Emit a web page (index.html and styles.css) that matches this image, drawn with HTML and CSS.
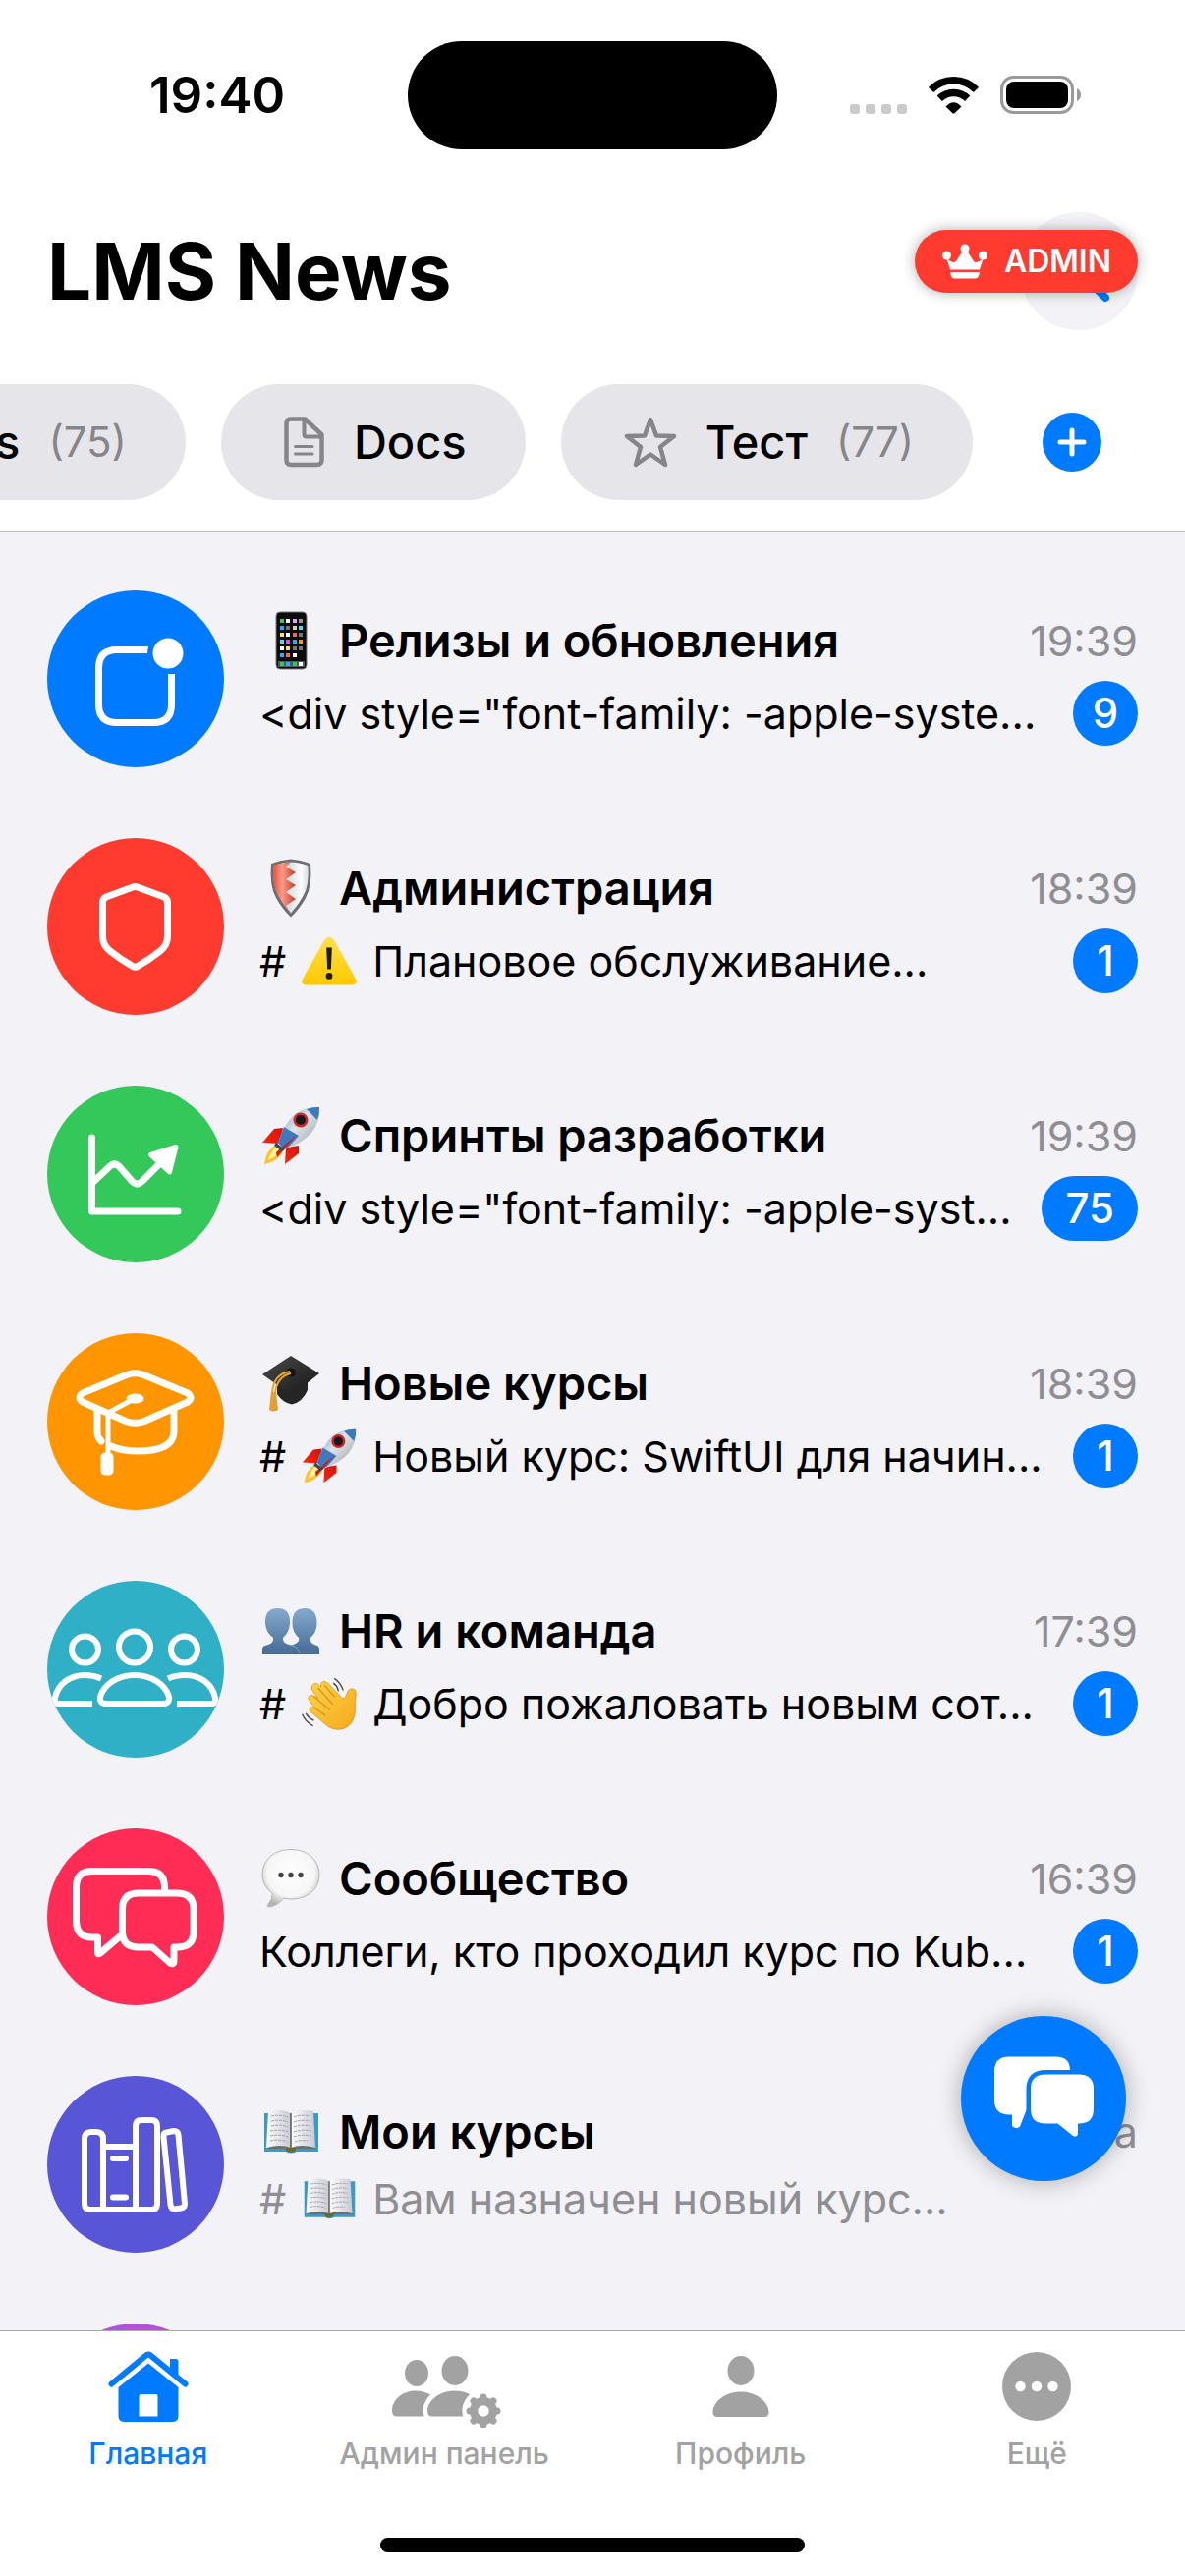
FILE: index.html
```html
<!DOCTYPE html>
<html lang="ru">
<head>
<meta charset="utf-8">
<meta name="viewport" content="width=device-width, initial-scale=1">
<title>LMS News</title>
<link rel="stylesheet" href="styles.css">
</head>
<body>
<svg class="defs" aria-hidden="true">
  <defs>
    <linearGradient id="g-cap" x1="0" y1="0" x2="1" y2="1"><stop offset="0" stop-color="#4a4a4a"/><stop offset="1" stop-color="#161616"/></linearGradient>
    <linearGradient id="g-warn" x1="0" y1="0" x2="0" y2="1"><stop offset="0" stop-color="#ffe04a"/><stop offset="1" stop-color="#ffc800"/></linearGradient>
    <linearGradient id="g-people" x1="0" y1="0" x2="0" y2="1"><stop offset="0" stop-color="#84abcf"/><stop offset="1" stop-color="#456a93"/></linearGradient>
    <linearGradient id="g-hull" x1="0" y1="0" x2="1" y2="1"><stop offset="0" stop-color="#5b92cf"/><stop offset=".45" stop-color="#dfe4e8"/><stop offset="1" stop-color="#8f979f"/></linearGradient>
    <linearGradient id="g-fin" x1="1" y1="0" x2="0" y2="1"><stop offset="0" stop-color="#c00d0d"/><stop offset=".6" stop-color="#f0200c"/><stop offset="1" stop-color="#ff9a2e"/></linearGradient>
    <linearGradient id="g-hand" x1="0" y1="0" x2="1" y2="1"><stop offset="0" stop-color="#ffd44a"/><stop offset="1" stop-color="#f5a91c"/></linearGradient>
    <radialGradient id="g-speech" cx=".5" cy=".4" r=".6"><stop offset="0" stop-color="#fff"/><stop offset=".7" stop-color="#f6f6f6"/><stop offset="1" stop-color="#b4b4b4"/></radialGradient>
    <linearGradient id="g-red" x1="0" y1="0" x2="1" y2="0"><stop offset="0" stop-color="#e8503c"/><stop offset=".4" stop-color="#ff9a88"/><stop offset="1" stop-color="#b83c2c"/></linearGradient>
    <linearGradient id="g-silver" x1="0" y1="0" x2="1" y2="0"><stop offset="0" stop-color="#b4b9be"/><stop offset=".8" stop-color="#fbfcfd"/><stop offset="1" stop-color="#d8dcdf"/></linearGradient>
    <linearGradient id="g-page" x1="0" y1="0" x2="1" y2="0"><stop offset="0" stop-color="#fdfdff"/><stop offset="1" stop-color="#c9cad3"/></linearGradient>
  </defs>

  <symbol id="e-phone" viewBox="0 0 64 64">
    <rect x="17" y="3" width="31" height="58" rx="4" fill="#0c0c0d" stroke="#7d7d80" stroke-width="1"/>
    <rect x="19" y="53" width="27" height="6" fill="#55585a"/>
    <g fill="#34c759"><rect x="21" y="10" width="4" height="4"/><rect x="21" y="54" width="4" height="4"/><rect x="34" y="54" width="4" height="4"/></g>
    <g fill="#fff"><rect x="27" y="10" width="4" height="4"/><rect x="27" y="24" width="4" height="4"/><rect x="21" y="38" width="4" height="4"/><rect x="34" y="45" width="4" height="4"/><rect x="40" y="54" width="4" height="4"/></g>
    <g fill="#1fb0ff"><rect x="21" y="17" width="4" height="4"/><rect x="34" y="31" width="4" height="4"/><rect x="21" y="45" width="4" height="4"/><rect x="27" y="54" width="4" height="4"/></g>
    <g fill="#4dd8f5"><rect x="40" y="17" width="4" height="4"/><rect x="21" y="31" width="4" height="4"/></g>
    <g fill="#ff6358"><rect x="34" y="24" width="4" height="4"/><rect x="27" y="45" width="4" height="4"/></g>
    <g fill="#ffe14d"><rect x="21" y="24" width="4" height="4"/><rect x="27" y="38" width="4" height="4"/></g>
    <g fill="#777"><rect x="27" y="17" width="4" height="4"/><rect x="40" y="24" width="4" height="4"/><rect x="34" y="38" width="4" height="4"/><rect x="40" y="38" width="4" height="4"/></g>
    <rect x="34" y="10" width="4" height="4" fill="#e3a3f2"/><rect x="40" y="10" width="4" height="4" fill="#999"/><rect x="34" y="17" width="4" height="4" fill="#e5c8a8"/><rect x="27" y="31" width="4" height="4" fill="#d94fe0"/><rect x="40" y="31" width="4" height="4" fill="#ff9500"/>
  </symbol>
  <symbol id="e-shield" viewBox="0 0 64 64">
    <path d="M12 7Q22 3 32 2.500Q42 3 52 7Q54 30 47 42Q41 53 32 61.500Q23 53 17 42Q10 30 12 7Z" fill="#6c6e71"/>
    <path d="M14.500 9Q24 5.500 32 5.500Q40 5.500 49.500 9Q51 29 44.500 40Q39 50 32 57.500Q25 50 19.500 40Q13 29 14.500 9Z" fill="url(#g-silver)"/>
    <path d="M14.500 9Q24 5.500 32 5.500L27 10L37 16L27 23L37 29L27 36L37 43L27 50L32 57.500Q25 50 19.500 40Q13 29 14.500 9Z" fill="url(#g-red)"/>
  </symbol>
  <symbol id="e-warning" viewBox="0 0 64 64">
    <path d="M32 6Q35 6 37 9L61 52Q63 57 58 58H6Q1 57 3 52L27 9Q29 6 32 6Z" fill="url(#g-warn)"/>
    <path d="M29 17.500H35L34 41H30Z" fill="#1b1b14"/><circle cx="32" cy="48.500" r="3.600" fill="#1b1b14"/>
  </symbol>
  <symbol id="e-rocket" viewBox="0 0 64 64">
    <path d="M24 24L15 25L3 39L21 40ZM40 42V50L26 61L27 44Z" fill="url(#g-fin)"/>
    <path d="M17 41Q7 46 5 61Q17 59 24 49Z" fill="#ffc22e"/><path d="M18 43Q11 48 9 57Q17 53 22 48Z" fill="#fff49a"/>
    <path d="M61 3Q46 2 35 11Q25 21 19 39L25 46Q43 40 53 29Q62 18 61 3Z" fill="url(#g-hull)"/>
    <path d="M61 3Q54 2.500 48 5L59 16Q61.500 10 61 3ZM25 23L19 39L25 46L30 43L40 32Z" fill="#3f79bd"/>
    <path d="M38 31L18 54L17 49Z" fill="#d4180f"/>
    <path d="M17 39L26 46L23 48L15 42Z" fill="#33495c"/>
    <circle cx="42" cy="16" r="7.500" fill="#d4232b"/><circle cx="42" cy="16" r="5" fill="#17191d"/>
  </symbol>
  <symbol id="e-cap" viewBox="0 0 64 64">
    <path d="M18 27V43Q24 52 33 53.500Q44 51 49 39V27Z" fill="#252525"/>
    <path d="M32 4L61 22L33 44L3 23Z" fill="url(#g-cap)"/>
    <ellipse cx="32" cy="21" rx="5" ry="4.500" fill="#111"/>
    <path d="M31 20Q14 23 13 42M32 22Q18 25 16 42" fill="none" stroke="#e8a52c" stroke-width="2"/>
    <path d="M12 41H17L19 59Q14 62 10 59Z" fill="#e3a032"/>
  </symbol>
  <symbol id="e-people" viewBox="0 0 64 64">
    <path d="M3 56V50Q3 47 9 46Q15 44 14 39Q7 34 6 25Q5 9 18.500 9Q32 9 31 25Q30 34 24 39Q23 44 30 46Q32 46.500 33 46.500Q42 44 40 39Q34 34 33.500 25Q33 9 46 9Q59 9 58.500 25Q58 34 52 39Q51 44 56 46Q61 47 61 50V56Z" fill="url(#g-people)"/>
    <path d="M30 46Q40 48 41 55" fill="none" stroke="#7aa6c8" stroke-width="1"/>
  </symbol>
  <symbol id="e-wave" viewBox="0 0 64 64">
    <path d="M14 12Q17 8 21 12L23 14Q22 8 27 8L31 10L45 25Q49 30 52 19Q55 14 60 17Q62 20 60 30Q62 50 52 57Q42 63 31 57L11 40Q10 35 16 36L10 28Q8 23 14 23L20 26L14 18Q12 15 14 12Z" fill="url(#g-hand)" stroke="#e39a20" stroke-width="1"/>
    <path d="M20 15L36 33M15 24L33 39M15 36L28 45M27 12L38 25" fill="none" stroke="#dc9420" stroke-width="1.500"/>
    <path d="M38 5Q44 9 47 17M37 10Q41 13 42 18M3 44Q6 51 14 56M7 43Q10 48 15 50" fill="none" stroke="#4d4d4d" stroke-width="1.500" stroke-linecap="round"/>
  </symbol>
  <symbol id="e-speech" viewBox="0 0 64 64">
    <path d="M32 2.500C49 2.500 61 13 61 28C61 43 49 53 33 53Q28 53 25 52Q17 61 9 61Q7 60.500 9 58Q14 53 13 47Q3 40 3 28C3 13 15 2.500 32 2.500Z" fill="url(#g-speech)" stroke="#b9b9b9" stroke-width="1"/>
    <g fill="#444"><circle cx="22" cy="28.500" r="2.700"/><circle cx="32" cy="28.500" r="2.700"/><circle cx="42" cy="28.500" r="2.700"/></g>
  </symbol>
  <symbol id="e-book" viewBox="0 0 64 64">
    <path d="M5 13H60V52H38Q32 55 27 52H5Z" fill="#3a9bc9"/>
    <path d="M8 46H31H57V49H36Q32 51 28 49H8Z" fill="#6c6d72"/>
    <path d="M9 11Q24 8 32 13V48Q22 44 7 48Z" fill="url(#g-page)"/>
    <path d="M55 11Q40 8 32 13V48Q42 44 57 48Z" fill="url(#g-page)"/>
    <path d="M12 16Q21 14 29 17M12 21Q21 19 29 22M12 26Q21 24 29 27M11 31Q21 29 29 32M11 36Q21 34 29 37M11 41Q21 39 28 42M35 17Q43 14 52 16M35 22Q43 19 52 21M35 27Q43 24 52 26M35 32Q43 29 53 31M35 37Q43 34 53 36M36 42Q41 40 49 41" fill="none" stroke="#9b9ca4" stroke-width="1" stroke-dasharray="3 1"/>
    <path d="M32 13V49" stroke="#55565c" stroke-width="1.500"/>
    <path d="M27 48H37V51Q32 54 27 51Z" fill="#6f6a20"/>
  </symbol>
</svg>

<div class="app">
  <header class="header">
    <div class="status">
      <time class="status-time">19:40</time>
      <div class="island"></div>
      <div class="status-icons">
        <svg class="signal" viewBox="0 0 58 38" aria-hidden="true"><g fill="#cbcbcb"><rect y="28" width="10" height="10" rx="3"/><rect x="16" y="28" width="10" height="10" rx="3"/><rect x="32" y="28" width="10" height="10" rx="3"/><rect x="48" y="28" width="10" height="10" rx="3"/></g></svg>
        <svg class="wifi" viewBox="0 0 51 38" aria-hidden="true"><path d="M2.500 13.500A32 32 0 0 1 48.500 13.500M11.300 22.300A20.500 20.500 0 0 1 39.700 22.300" fill="none" stroke="#000" stroke-width="7.500"/><path d="M17.500 30.500Q25.500 22 33.500 30.500L26.500 37.200Q25.500 38 24.500 37.200Z"/></svg>
        <svg class="battery" viewBox="0 0 83 40" aria-hidden="true"><rect x="1.500" y="1.500" width="72" height="36" rx="12" fill="none" stroke="#9a9a9a" stroke-width="3"/><rect x="6" y="6" width="63" height="27" rx="8"/><path d="M78 13Q82 15 82 19.500Q82 24 78 26Z" fill="#9a9a9a"/></svg>
      </div>
    </div>
    <div class="titlebar">
      <h1>LMS News</h1>
      <button class="search" type="button" aria-label="Поиск">
        <svg viewBox="0 0 64 64" aria-hidden="true"><circle cx="27" cy="27" r="20" fill="none" stroke="#007aff" stroke-width="7"/><path d="M42 42L59 59" stroke="#007aff" stroke-width="8" stroke-linecap="round"/></svg>
      </button>
      <button class="admin" type="button">
        <svg viewBox="0 0 46 36" aria-hidden="true"><g fill="#fff"><circle cx="23" cy="5" r="4.500"/><circle cx="4.500" cy="12" r="4.500"/><circle cx="41.500" cy="12" r="4.500"/><path d="M4 14Q10 21 14 18L21 7H25L32 18Q36 21 42 14L38 26.500H8ZM8 29H38L37 33Q36 35.500 33 35.500H13Q10 35.500 9 33Z"/></g></svg>
        ADMIN
      </button>
    </div>
    <nav class="chips" aria-label="Папки">
      <button class="chip" type="button"><span>s</span><span class="count">(75)</span></button>
      <button class="chip" type="button">
        <svg class="chip-doc" viewBox="0 0 42 52" aria-hidden="true"><g fill="none" stroke="#85858a" stroke-linecap="round" stroke-linejoin="round"><path d="M7 2.500H21.500L38.500 18.500V44Q38.500 49 33.500 49H7Q2.500 49 2.500 44V7Q2.500 2.500 7 2.500Z" stroke-width="4.500"/><path d="M20.500 3V18Q20.500 20.500 23 20.500H38" stroke-width="4"/><path d="M11.500 30.500H29M11.500 38H29" stroke-width="3"/></g></svg>
        <span>Docs</span>
      </button>
      <button class="chip" type="button">
        <svg class="chip-star" viewBox="0 0 54 52" aria-hidden="true"><path d="M27 3L33 19.500L51 20L37 31L42 49L27 38.500L12 49L17 31L3 20L21 19.500Z" fill="none" stroke="#85858a" stroke-width="4.500" stroke-linejoin="round"/></svg>
        <span>Тест</span><span class="count">(77)</span>
      </button>
      <button class="add" type="button" aria-label="Добавить">
        <svg viewBox="0 0 60 60" aria-hidden="true"><circle cx="30" cy="30" r="30" fill="#007aff"/><path d="M30 18V42M18 30H42" stroke="#fff" stroke-width="5" stroke-linecap="round"/></svg>
      </button>
    </nav>
  </header>

  <main class="main">
    <div class="list">
      <a class="row" href="#releases">
        <svg class="avatar blue" viewBox="0 0 180 180" aria-hidden="true"><path stroke-linecap="butt" d="M103 60.500H71Q52.500 60.500 52.500 79V116Q52.500 134.500 71 134.500H108Q126.500 134.500 126.500 116V85"/><circle class="gap" cx="123" cy="64" r="21"/><circle class="solid" cx="123" cy="64" r="15.500"/></svg>
        <div class="text">
          <div class="line"><h2><svg class="emoji" role="img" aria-label="Телефон"><use href="#e-phone"/></svg>Релизы и обновления</h2><time>19:39</time></div>
          <div class="line"><p>&lt;div style="font-family: -apple-syste...</p><span class="badge">9</span></div>
        </div>
      </a>
      <a class="row" href="#administration">
        <svg class="avatar red" viewBox="0 0 180 180" aria-hidden="true"><path d="M87 50Q89.500 49 92 50L119 60Q122.500 61.500 122.500 66V100Q122.500 109 115 115Q105 123 92 130.500Q89.500 132 87 130.500Q74 123 64 115Q56.500 109 56.500 100V66Q56.500 61.500 60 60Z"/></svg>
        <div class="text">
          <div class="line"><h2><svg class="emoji" role="img" aria-label="Щит"><use href="#e-shield"/></svg>Администрация</h2><time>18:39</time></div>
          <div class="line"><p># <svg class="emoji small" role="img" aria-label="Внимание"><use href="#e-warning"/></svg>Плановое обслуживание...</p><span class="badge">1</span></div>
        </div>
      </a>
      <a class="row" href="#sprints">
        <svg class="avatar green" viewBox="0 0 180 180" aria-hidden="true"><path d="M45.500 53V128H133M47 98L64 82Q68.500 78 73 82L87 98Q91.500 102 96 98L118 76"/><path class="solid" d="M131 62.500L124.500 88L105.500 70.500Z" stroke-width="5"/></svg>
        <div class="text">
          <div class="line"><h2><svg class="emoji" role="img" aria-label="Ракета"><use href="#e-rocket"/></svg>Спринты разработки</h2><time>19:39</time></div>
          <div class="line"><p>&lt;div style="font-family: -apple-syst...</p><span class="badge wide">75</span></div>
        </div>
      </a>
      <a class="row" href="#new-courses">
        <svg class="avatar orange" viewBox="0 0 180 180" aria-hidden="true"><path d="M82 42Q89.500 39.500 97 42L143 61Q149 65.500 143 70L99 89.500Q89.500 93 80 89.500L36 70Q30 65.500 36 61Z"/><path d="M129 79V101Q128 120 92 120Q76 120 65 115M51 79V101Q51 106 55 110"/><path d="M88 67L62 81V124" stroke-width="5"/><ellipse class="solid" cx="89.500" cy="66.500" rx="8" ry="4" stroke-width="2"/><rect class="solid" x="56" y="123" width="10" height="20" rx="3" stroke-width="3"/></svg>
        <div class="text">
          <div class="line"><h2><svg class="emoji" role="img" aria-label="Шапочка"><use href="#e-cap"/></svg>Новые курсы</h2><time>18:39</time></div>
          <div class="line"><p># <svg class="emoji small" role="img" aria-label="Ракета"><use href="#e-rocket"/></svg>Новый курс: SwiftUI для начин...</p><span class="badge">1</span></div>
        </div>
      </a>
      <a class="row" href="#hr">
        <svg class="avatar teal" viewBox="0 0 180 180" aria-hidden="true"><circle cx="89" cy="67.500" r="16"/><circle cx="38.500" cy="70" r="13.500"/><circle cx="139.500" cy="70" r="13.500"/><path d="M60 125H118Q125 125 124 118C120 105 106 96 89 96C72 96 58 105 54 118Q53 125 60 125Z"/><path d="M46 125H12Q7 125 8 119C11 105 23 96 38.500 96Q47 96 55 99.500M132 125H167Q172 125 171 119C168 105 156 96 140.500 96Q131 96 123 99.500" stroke-linecap="butt"/></svg>
        <div class="text">
          <div class="line"><h2><svg class="emoji" role="img" aria-label="Люди"><use href="#e-people"/></svg>HR и команда</h2><time>17:39</time></div>
          <div class="line"><p># <svg class="emoji small" role="img" aria-label="Привет"><use href="#e-wave"/></svg>Добро пожаловать новым сот...</p><span class="badge">1</span></div>
        </div>
      </a>
      <a class="row" href="#community">
        <svg class="avatar pink" viewBox="0 0 180 180" aria-hidden="true"><path d="M119.500 64V60Q119.500 43.500 103 43.500H46Q29.500 43.500 29.500 60V94Q29.500 111 46 111H51.500V126Q51.500 129 54 127L74 110"/><path d="M93 66H132Q149 66 149 82V105Q149 121 132 121H129V135Q129 139 125 137L107 121H93Q76.500 121 76.500 105V82Q76.500 66 93 66Z"/></svg>
        <div class="text">
          <div class="line"><h2><svg class="emoji" role="img" aria-label="Реплика"><use href="#e-speech"/></svg>Сообщество</h2><time>16:39</time></div>
          <div class="line"><p>Коллеги, кто проходил курс по Kub...</p><span class="badge">1</span></div>
        </div>
      </a>
      <a class="row read" href="#my-courses">
        <svg class="avatar indigo" viewBox="0 0 180 180" aria-hidden="true"><path d="M57 136V64Q57 57 50 57H45Q38 57 38 64V130Q38 136 44 136H106Q112 136 112 130V51Q112 45 106 45H96Q90 45 90 51V136M57 72H90M67 84H80M67 123.500H80M121.500 57.500L129 56Q133 56 133.500 60L140 130Q140 134 136 134.500L130 135.500Q126 135.500 125.500 131L118.500 62Q118 58 121.500 57.500Z"/></svg>
        <div class="text">
          <div class="line"><h2><svg class="emoji" role="img" aria-label="Книга"><use href="#e-book"/></svg>Мои курсы</h2><time>Вчера</time></div>
          <div class="line"><p># <svg class="emoji small" role="img" aria-label="Книга"><use href="#e-book"/></svg>Вам назначен новый курс...</p></div>
        </div>
      </a>
      <div class="row">
        <svg class="avatar purple" viewBox="0 0 180 180" aria-hidden="true"></svg>
      </div>
    </div>
    <button class="fab" type="button" aria-label="Чаты">
      <svg viewBox="0 0 168 168" aria-hidden="true"><path d="M49 41.500H97Q111 41.500 111 55.500V87H70L60 112.500Q56 116 52 112V100.500H49Q34 100.500 34 86V56Q34 41.500 49 41.500Z" fill="#fff"/><path d="M86 59.500H120Q135 59.500 135 74V95Q135 109.500 120 109.500H119V119Q119 124 114 122L98.500 109.500H86Q71 109.500 71 95V74Q71 59.500 86 59.500Z" fill="#fff" stroke="#007aff" stroke-width="9" paint-order="stroke"/></svg>
    </button>
  </main>

  <footer class="tabbar">
    <nav class="tabs">
      <a class="tab active" href="#home">
        <svg viewBox="0 0 120 84" aria-hidden="true"><path d="M82 14H88Q90.500 14 90.500 16.500V32L82 25ZM60 18.500L90.500 43V72Q90.500 78 84 78H36Q29.500 78 29.500 72V43ZM50.500 52V72.500H69.500V52Q69.500 50 67.500 50H52.500Q50.500 50 50.500 52Z" fill="currentColor" fill-rule="evenodd"/><path d="M22.500 39.500L57 11Q60 8 63 11L97.500 39.500" fill="none" stroke="currentColor" stroke-width="6" stroke-linecap="round"/></svg>
        <span>Главная</span>
      </a>
      <a class="tab" href="#admin">
        <svg viewBox="0 0 120 84" aria-hidden="true"><g fill="currentColor"><ellipse cx="32" cy="28.500" rx="12" ry="13.500"/><ellipse cx="71" cy="26" rx="13.500" ry="15"/><path d="M46 50.500Q39 46.500 31 46.500C17 46.500 7 56 7 67Q7 72.500 12 72.500H39.500Q36 60 46 50.500ZM86 50Q80 46.500 71 46.500C55 46.500 43 57 43 67Q43 72.500 48 72.500H79Q76 60 86 50Z"/></g><circle cx="100" cy="67" r="10" fill="none" stroke="currentColor" stroke-width="8"/><path d="M100 53V81M86 67H114M90 57L110 77M110 57L90 77" stroke="currentColor" stroke-width="7" stroke-linecap="round"/><circle cx="100" cy="67" r="5.700" fill="#fff"/></svg>
        <span>Админ панель</span>
      </a>
      <a class="tab" href="#profile">
        <svg viewBox="0 0 120 84" aria-hidden="true"><g fill="currentColor"><ellipse cx="60" cy="26" rx="13.500" ry="15"/><path d="M60 47.500C76 47.500 88.500 58 88.500 68Q88.500 73 84 73H36Q31.500 73 31.500 68C31.500 58 44 47.500 60 47.500Z"/></g></svg>
        <span>Профиль</span>
      </a>
      <a class="tab" href="#more">
        <svg viewBox="0 0 120 84" aria-hidden="true"><circle cx="60" cy="42" r="35" fill="currentColor"/><g fill="#fff"><circle cx="43.500" cy="42" r="5.200"/><circle cx="60" cy="42" r="5.200"/><circle cx="76.500" cy="42" r="5.200"/></g></svg>
        <span>Ещё</span>
      </a>
    </nav>
    <div class="home-indicator"></div>
  </footer>
</div>
</body>
</html>
```
FILE: styles.css
```css
* { box-sizing: border-box; }

body {
  margin: 0;
  font-family: Inter, "Liberation Sans", sans-serif;
  color: #000;
  background: #fff;
}

h1, h2, p { margin: 0; }
a { color: inherit; text-decoration: none; }
svg { display: block; flex: none; }

button {
  margin: 0;
  padding: 0;
  border: 0;
  font: inherit;
  color: inherit;
  background: none;
}

.defs { position: absolute; width: 0; height: 0; }

.app {
  display: flex;
  flex-direction: column;
  height: 100vh;
  overflow: hidden;
}

/* Header */
.header {
  flex: none;
  padding-bottom: 31px;
  border-bottom: 1px solid #c0c0c3;
  background: #fff;
}

.status {
  display: grid;
  grid-template-columns: 1fr 376px 1fr;
  align-items: center;
  height: 194px;
}

.status-time {
  padding-left: 152px;
  font-size: 51px;
  line-height: 62px;
  font-weight: 600;
}

.island {
  height: 110px;
  border-radius: 55px;
  background: #000;
}

.status-icons {
  display: flex;
  align-items: center;
  justify-content: flex-end;
  gap: 22px;
  padding-right: 105px;
}

.signal { width: 58px; height: 38px; }
.wifi { width: 51px; height: 38px; }
.battery { width: 83px; height: 40px; }

.titlebar {
  position: relative;
  display: flex;
  align-items: center;
  justify-content: space-between;
  padding: 22px 48px 55px;
}

h1 {
  font-size: 80px;
  line-height: 98px;
  font-weight: 700;
}

.search {
  display: grid;
  place-items: center;
  width: 120px;
  height: 120px;
  border-radius: 50%;
  background: #f2f2f7;
}

.search svg { width: 64px; height: 64px; }

.admin {
  position: absolute;
  top: 40px;
  right: 48px;
  display: flex;
  align-items: center;
  gap: 17px;
  height: 64px;
  padding: 0 27px 0 28px;
  border-radius: 32px;
  background: #ff3b30;
  box-shadow: 0 0 14px rgba(0, 0, 0, 0.32);
  color: #fff;
  font-size: 32px;
  line-height: 40px;
  font-weight: 600;
}

.admin svg { width: 46px; height: 36px; }

.chips {
  display: flex;
  justify-content: flex-end;
  align-items: center;
  gap: 36px;
  padding-right: 85px;
  overflow: hidden;
}

.chip {
  display: flex;
  flex: none;
  align-items: center;
  gap: 29px;
  height: 118px;
  padding: 0 60px 0 64px;
  border-radius: 59px;
  background: #e5e5ea;
  font-size: 47px;
  line-height: 60px;
  font-weight: 500;
}

.chip-doc { width: 42px; height: 52px; }
.chip-star { width: 54px; height: 52px; }

.count {
  color: #85858a;
  font-size: 42px;
  font-weight: 400;
}

.add {
  flex: none;
  margin-left: 35px;
}

.add svg { width: 60px; height: 60px; }

/* Channel list */
.main {
  position: relative;
  flex: 1;
  min-height: 0;
  background: #f2f2f7;
}

.list {
  height: 100%;
  padding-top: 24px;
  overflow: hidden;
}

.row {
  display: flex;
  align-items: center;
  gap: 36px;
  padding: 36px 48px;
}

.avatar {
  width: 180px;
  height: 180px;
  border-radius: 50%;
  fill: none;
  stroke: #fff;
  stroke-width: 7px;
  stroke-linecap: round;
  stroke-linejoin: round;
}

.avatar .solid { fill: #fff; }
.avatar .gap { fill: #007aff; stroke: none; }
.avatar circle.solid { stroke: none; }
.blue { background: #007aff; }
.red { background: #ff3b30; }
.green { background: #34c759; }
.orange { background: #ff9500; }
.teal { background: #30b0c7; stroke-width: 6px; }
.pink { background: #ff2d55; }
.indigo { background: #5856d6; stroke-width: 6px; }
.purple { background: #af52de; }

.text {
  display: grid;
  flex: 1;
  gap: 12px;
  min-width: 0;
}

.line {
  display: flex;
  align-items: center;
  justify-content: space-between;
  white-space: nowrap;
}

h2 {
  display: flex;
  align-items: center;
  gap: 17px;
  height: 58px;
  font-size: 47px;
  line-height: 58px;
  font-weight: 600;
}

.line p {
  display: flex;
  align-items: center;
  gap: 14px;
  font-size: 43px;
  line-height: 54px;
}

.line time {
  color: #8e8e93;
  font-size: 43px;
  line-height: 58px;
}

.read p { color: #8e8e93; }

.emoji { width: 64px; height: 64px; }
.emoji.small { width: 60px; height: 60px; }
.line p:has(.emoji) { height: 54px; }

.badge {
  display: grid;
  place-items: center;
  min-width: 66px;
  height: 66px;
  border-radius: 33px;
  background: #007aff;
  color: #fff;
  font-size: 42px;
  line-height: 66px;
  font-weight: 500;
}

.badge.wide { padding: 0 24px; }

.fab {
  position: absolute;
  right: 60px;
  bottom: 152px;
  width: 168px;
  height: 168px;
  border-radius: 50%;
  background: #007aff;
  box-shadow: 0 0 24px rgba(0, 0, 0, 0.3);
}

/* Tab bar */
.tabbar {
  flex: none;
  padding: 14px 0 24px;
  border-top: 1px solid #a7a7aa;
  background: #fff;
}

.tabs {
  display: grid;
  grid-template-columns: repeat(4, 1fr);
}

.tab {
  display: grid;
  justify-items: center;
  gap: 8px;
  color: #a2a2a2;
  font-size: 30px;
  line-height: 36px;
  font-weight: 500;
}

.tab svg { width: 120px; height: 84px; }
.tab.active { color: #007aff; }

.home-indicator {
  width: 432px;
  height: 15px;
  margin: 68px auto 0;
  border-radius: 8px;
  background: #000;
}
```
